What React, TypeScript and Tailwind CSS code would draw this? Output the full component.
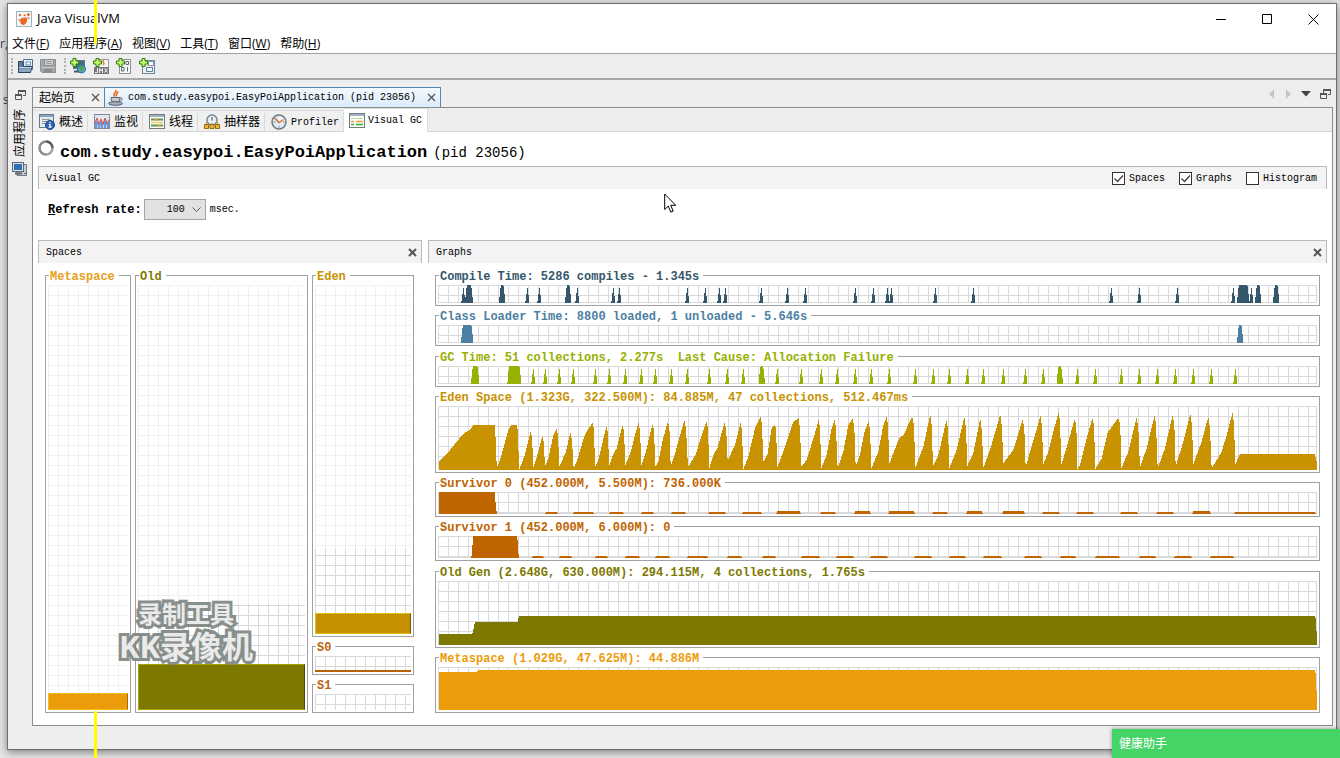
import React from "react";

type Pt = [number, number];

const MONO = "font-['Liberation_Mono','Noto_Sans_CJK_SC',monospace]";
const UI = "font-['Open_Sans','Noto_Sans_CJK_SC',sans-serif]";
const GRID =
  "bg-[linear-gradient(to_right,#d9d9dc_1px,transparent_1px),linear-gradient(to_bottom,#d9d9dc_1px,transparent_1px)] bg-[size:10px_10px]";

/* Charts are plotted at three units per pixel; samples come in pages of 900 units. */
const PAGE = 900;
const LEFT = 24;
const WIDTH = 2637;

const join = (...pages: Pt[][]): Pt[] =>
  pages.flatMap((p, i) => p.map(([x, y]) => [x + i * PAGE, y] as Pt));

const poly = (pts: Pt[]) => pts.map((p) => p.join(",")).join(" ");

/* narrow spike: 4px foot, 1px tip */
const spike = (x: number) =>
  `${x - 6},54 ${x - 6},48 ${x - 4},48 ${x - 4},33 ${x - 1},24 ${x - 1},9 ${x + 2},9 ${x + 2},24 ${x + 5},33 ${x + 5},48 ${x + 6},48 ${x + 6},54`;
/* block: full height, slightly tapered */
const block = (a: number, b: number) => {
  const t = Math.min(6, (b - a) / 3);
  return `${a},54 ${a + t / 2},20 ${a + t},0 ${b - t},0 ${b - t / 2},20 ${b},54`;
};

const compileSpikes = [
  100, 292, 328, 441, 549, 568, 771, 825, 868, 886, 993, 1072, 1126, 1275, 1330, 1372, 1384, 1516, 1630, 2043, 2128,
  2242, 2409, 2464,
];
const compileBlocks: Pt[] = [[105, 129], [207, 226], [405, 424], [2421, 2458], [2475, 2494], [2529, 2548]];
const classBlocks: Pt[] = [[93, 130], [2421, 2440]];
const gcSpikes = [
  309, 345, 387, 429, 496, 538, 586, 634, 676, 724, 771, 837, 891, 939, 1041, 1113, 1173, 1221, 1275, 1323, 1377,
  1456, 1510, 1558, 1612, 1660, 1720, 1786, 1839, 1942, 1996, 2074, 2128, 2182, 2236, 2290, 2344, 2416,
];
const gcBlocks: Pt[] = [[123, 148], [232, 274], [986, 1005], [1880, 1899]];

const eden = join(
  [
    [27, 615], [27, 590], [60, 555], [95, 512], [105, 502], [118, 497], [130, 481], [195, 481], [200, 600], [203, 603],
    [213, 575], [235, 495], [243, 481], [262, 481], [268, 612], [275, 595], [285, 568], [302, 500], [306, 515],
    [310, 607], [322, 570], [337, 513], [341, 530], [345, 604], [355, 580], [370, 510], [380, 492], [384, 510],
    [388, 605], [395, 590], [408, 560], [421, 502], [426, 525], [431, 612], [440, 590], [465, 508], [488, 472],
    [491, 490], [496, 605], [505, 585], [529, 485], [533, 500], [538, 602], [548, 570], [560, 550], [578, 480],
    [582, 500], [586, 600], [600, 568], [625, 473], [630, 495], [634, 600], [645, 570], [667, 478], [672, 495],
    [676, 605], [685, 590], [697, 530], [714, 468], [719, 500], [722, 603], [735, 565], [763, 466], [768, 490],
    [774, 607], [797, 568], [829, 468], [834, 490], [838, 610], [850, 570], [862, 550], [884, 472], [889, 500],
    [893, 590],
  ],
  [
    [0, 572], [15, 540], [32, 472], [36, 500], [40, 612], [55, 575], [75, 490], [92, 454], [96, 480], [100, 590],
    [112, 570], [125, 490], [134, 478], [138, 490], [142, 607], [160, 560], [190, 470], [206, 460], [210, 490],
    [214, 605], [230, 585], [255, 505], [266, 463], [270, 490], [274, 610], [290, 570], [305, 490], [314, 463],
    [318, 490], [323, 612], [340, 560], [355, 480], [368, 460], [373, 490], [377, 605], [390, 570], [405, 495],
    [416, 470], [420, 495], [424, 610], [445, 560], [460, 480], [470, 455], [474, 480], [478, 596], [508, 518],
    [520, 510], [547, 455], [552, 480], [556, 608], [580, 545], [601, 448], [605, 480], [609, 604], [625, 570],
    [649, 466], [654, 490], [658, 610], [680, 555], [703, 455], [708, 490], [712, 603], [730, 565], [751, 460],
    [756, 500], [760, 608], [780, 555], [811, 448], [816, 490], [820, 595], [850, 555], [878, 463], [883, 490],
    [887, 607],
  ],
  [
    [0, 560], [18, 500], [32, 450], [36, 490], [40, 597], [55, 560], [70, 500], [86, 442], [90, 470], [94, 600],
    [115, 530], [134, 462], [139, 480], [142, 612], [150, 600], [170, 520], [187, 460], [192, 480], [196, 612],
    [215, 580], [233, 503], [260, 465], [267, 460], [271, 490], [274, 610], [295, 560], [320, 457], [325, 490],
    [330, 606], [350, 550], [374, 450], [378, 480], [383, 610], [405, 550], [428, 450], [433, 480], [437, 604],
    [460, 530], [481, 445], [486, 480], [490, 597], [515, 530], [535, 455], [540, 490], [545, 610], [575, 560],
    [590, 510], [608, 442], [612, 480], [616, 597], [630, 568], [855, 568], [860, 590], [860, 615],
  ],
);

/* [from, to, height] */
type Bar = [number, number, number];
const survivor0: Bar[] = [
  [343, 384, 6], [428, 492, 6], [535, 582, 6], [631, 672, 6], [721, 768, 6], [834, 888, 6], [936, 996, 6],
  [1038, 1113, 9], [1170, 1218, 6], [1272, 1323, 9], [1374, 1455, 9], [1506, 1554, 6], [1608, 1659, 9],
  [1716, 1785, 9], [1836, 1890, 6], [1938, 1992, 6], [2070, 2124, 6], [2178, 2232, 6], [2286, 2343, 9],
  [2412, 2658, 6],
];
const survivor1: Bar[] = [
  [306, 342, 6], [385, 427, 6], [493, 534, 6], [583, 630, 6], [673, 720, 6], [769, 834, 6], [889, 936, 6],
  [996, 1038, 6], [1111, 1170, 6], [1218, 1272, 6], [1320, 1374, 6], [1452, 1506, 6], [1555, 1608, 6],
  [1657, 1716, 6], [1782, 1836, 6], [1888, 1938, 6], [1993, 2070, 6], [2125, 2178, 6], [2232, 2286, 6],
  [2340, 2412, 6],
];
const bars = (list: Bar[]) =>
  list.map(([a, b, h]) => <polygon key={a} points={`${a},66 ${a + 5},${66 - h} ${b - 5},${66 - h} ${b},66`} />);

function Frame({ title, color, className, children }: {
  title: string; color: string; className?: string; children: React.ReactNode;
}) {
  return (
    <section className={`relative flex flex-col border border-[#a0a0a4] px-0.5 pb-0.5 pt-[9px] ${className ?? ""}`}>
      <h3 className={`absolute -top-[7px] left-[3px] whitespace-pre bg-white pl-px pr-1 text-[12px] font-bold leading-4 ${MONO} ${color}`}>
        {title}
      </h3>
      {children}
    </section>
  );
}

function Graph({ title, color, height, top = 0, children }: {
  title: string; color: string; height: string; top?: number; children: React.ReactNode;
}) {
  const units: Record<string, number> = {
    "h-[18px]": 54, "h-16": 192, "h-[22px]": 66, "h-[43px]": 129,
  };
  const h = units[height];
  return (
    <Frame title={title} color={color}>
      <div className={`${height} relative ${GRID}`}>
        <svg
          className="block h-full w-full"
          viewBox={`${LEFT} ${top} ${WIDTH} ${h}`}
          preserveAspectRatio="none"
          shapeRendering="crispEdges"
          aria-hidden="true"
        >
          <g className="fill-[#d9d9dc]">
            <rect x={LEFT + WIDTH - 3} y={top} width="3" height={h} />
            <rect x={LEFT} y={top + h - 3} width={WIDTH} height="3" />
          </g>
          <g className={color} fill="currentColor">{children}</g>
        </svg>
      </div>
    </Frame>
  );
}

function Space({ title, color, fill, veil, used, className }: {
  title: string; color: string; fill?: string; veil: number; used: number; className?: string;
}) {
  return (
    <Frame title={title} color={color} className={className}>
      <div className={`flex flex-1 flex-col justify-between ${GRID}`}>
        <div className="bg-white/60" style={{ height: `${veil}%` }} />
        {fill && <div className={fill} style={{ height: `${used}%` }} />}
      </div>
    </Frame>
  );
}

const svg16 = { width: 16, height: 16, viewBox: "0 0 16 16", "aria-hidden": true, className: "shrink-0" } as const;

const AppIcon = () => (
  <svg {...svg16}>
    <rect x=".5" y=".5" width="15" height="15" fill="#f4f8fa" stroke="#9db4c0" />
    <path d="M5 7.500c2-1.500 3.500 0 4.500-1.500l1.500 1.500c.8 2.500-1 6.500-3.800 6.500s-3.900-4-2.200-6.500z" fill="#ea6a24" />
    <circle cx="4" cy="4" r="1.200" fill="#ea6a24" /><circle cx="12.300" cy="3.500" r="1.500" fill="#ea6a24" />
    <circle cx="8.500" cy="4.300" r="1" fill="#ea6a24" /><circle cx="12.500" cy="7" r=".9" fill="#ea6a24" />
    <circle cx="3.500" cy="9" r=".9" fill="#ea6a24" />
  </svg>
);
const OpenIcon = () => (
  <svg {...svg16}>
    <path d="M6.500 1.500h9v10h-9z" fill="#e5eef8" stroke="#4d6e96" />
    <path d="M9 4h4.500v3H9z" fill="#fff" stroke="#6e8fb5" />
    <path d="M1.500 3.500h4l1 5h8.500l-1.500 6h-12z" fill="#5f7d9d" stroke="#2c4462" />
    <path d="M2 10.500h12.500L13 14H2z" fill="#8ba4bf" /><path d="M2 9.500h12.500" stroke="#c6d6e6" />
  </svg>
);
const SaveIcon = () => (
  <svg {...svg16}>
    <path d="M.5 1.500h15v13H2l-1.500-1.500z" fill="#a4a6a9" stroke="#8e9194" />
    <path d="M4.500 1.500h9v6h-9z" fill="#c9cbcd" stroke="#8b8d90" /><path d="M6.500 3.500h5M6.500 5.500h5" stroke="#96989b" />
    <path d="M1 9.500h14" stroke="#c4c6c8" /><path d="M4 11h8v3.500H4z" fill="#8a8d90" />
  </svg>
);
const Plus = () => (
  <path d="M3 .5h3v2.500h2.500v3H6v2.500H3V6H.5V3H3z" fill="#c4f56a" stroke="#2f7d12" />
);
const HostIcon = () => (
  <svg {...svg16}>
    <rect x="3.500" y="2.500" width="11" height="8" fill="#3f7080" stroke="#6e7780" />
    <path d="M4 13.500h7M8 11v2" stroke="#555" strokeWidth="2" />
    <circle cx="11.500" cy="11" r="4" fill="#5aa7d8" stroke="#2c6c9c" />
    <path d="M9 9l3-1.500 2 2-1.500 2.500-1 2-2-2z" fill="#4fa545" /><Plus />
  </svg>
);
const JmxIcon = () => (
  <svg {...svg16}>
    <rect x="4.500" y="1.500" width="11" height="9" fill="#f7f7f7" stroke="#999" />
    <path d="M11 2c-3 2 2 3-1 5" stroke="#e5852f" fill="none" strokeWidth="1.500" />
    <rect x="1" y="9" width="15" height="7" fill="#777" />
    <path d="M4.500 10v4.500H2M6.500 15v-4.500L8 13l1.500-2.500V15M11.500 10.500l3 4M14.500 10.500l-3 4" stroke="#f2f2f2" fill="none" />
    <Plus />
  </svg>
);
const DumpIcon = () => (
  <svg {...svg16}>
    <rect x="3.500" y="1.500" width="11" height="14" fill="#f6f7f8" stroke="#8b9298" />
    <path d="M10 3.500h2.500v3H10zM5.500 9.500h2.500v3.500H5.500zM11.500 9v4.500" stroke="#5d6a76" fill="none" /><Plus />
  </svg>
);
const SnapIcon = () => (
  <svg {...svg16}>
    <rect x="3.500" y="2.500" width="12" height="13" fill="#e9eff6" stroke="#70889f" />
    <path d="M9.500 3.500h5v4h-5z" fill="#fff" stroke="#7b94ac" />
    <path d="M7.500 9.500h6v4h-6z" fill="#f4f8fc" stroke="#5b7fa5" /><path d="M8 7.500h3" stroke="#ef9a4a" /><Plus />
  </svg>
);
const JavaIcon = () => (
  <svg {...svg16}>
    <path d="M7.500 0c2 2-3 3-1 6.500M9.500 1.500c1 1.500-2 2-1 5" stroke="#e8731f" strokeWidth="1.700" fill="none" />
    <path d="M3 7.500h9l-.500 3.500c-.500 1.500-7.500 1.500-8 0z" fill="#c4ccd3" stroke="#5d6973" />
    <path d="M12 8c3.300-.500 2.800 3-.700 3" stroke="#5d6973" fill="none" />
    <ellipse cx="7.500" cy="13.500" rx="7" ry="1.800" fill="#a5aeb7" stroke="#525e68" />
  </svg>
);
const OverviewIcon = () => (
  <svg {...svg16}>
    <rect x=".5" y=".5" width="14" height="13" fill="#e3ebf2" stroke="#64798c" />
    <path d="M1 2h13" stroke="#8ba3b8" strokeWidth="2" /><path d="M3 5.500h8M3 7.500h5M3 9.500h4" stroke="#8c9aa7" />
    <circle cx="11" cy="11" r="4.500" fill="#2f66b4" stroke="#1d4585" />
    <path d="M11 7.800v1.400M9.800 10.500H11V13M9.600 13.200h3" stroke="#fff" strokeWidth="1.200" fill="none" />
  </svg>
);
const MonitorIcon = () => (
  <svg {...svg16}>
    <rect x=".5" y=".5" width="15" height="14" fill="#dfe8f0" stroke="#7f8c97" />
    <path d="M1 14V9l2-3 2 5 2-5 2 4 2-5 2 4 2-2v7z" fill="#6f96d8" />
    <path d="M1 9l2-5 2 6 2-5 2 5 2-6 2 5 2-3" stroke="#d8504a" fill="none" />
    <path d="M3.500 14v-3M6.500 14v-2M9.500 14v-3M12.500 14v-3" stroke="#c6daf5" />
  </svg>
);
const ThreadsIcon = () => (
  <svg {...svg16}>
    <rect x=".5" y=".5" width="15" height="14" fill="#fbfbf6" stroke="#6f7b86" />
    <path d="M1 2h14" stroke="#a3b1bd" strokeWidth="2" />
    <path d="M2 5.500h12" stroke="#58965a" strokeWidth="2" /><path d="M2 8.500h12" stroke="#edcf6a" strokeWidth="1.500" />
    <path d="M2 11.500h12" stroke="#58965a" strokeWidth="2" />
    <path d="M6 5.500h3M9 11.500h3" stroke="#e8a040" strokeWidth="2" />
  </svg>
);
const SamplerIcon = () => (
  <svg {...svg16}>
    <circle cx="8" cy="6" r="5" fill="#e9f1f8" stroke="#7c8791" strokeWidth="1.500" />
    <path d="M8 3v3.500" stroke="#444" />
    <path d="M2.500 11V8.500M13.500 11V8.500M8 11V9" stroke="#a87a20" />
    <path d="M.5 10.500h4v4h-4zM6 10.500h4v4H6zM11.500 10.500h4v4h-4z" fill="#f2b632" stroke="#94690f" />
  </svg>
);
const ProfilerIcon = () => (
  <svg {...svg16}>
    <circle cx="8" cy="8" r="7" fill="#dfeaf4" stroke="#6e7b86" strokeWidth="1.500" />
    <path d="M8 8V2.500A5.500 5.500 0 0 1 13.500 8z" fill="#f7fbff" />
    <path d="M3.500 4l4.500 4.500L12.500 5.500" stroke="#d9702f" strokeWidth="1.500" fill="none" />
    <path d="M8 13.500V12M2.500 8H4M13.500 8H12" stroke="#777" />
  </svg>
);
const GcIcon = () => (
  <svg {...svg16}>
    <rect x=".5" y=".5" width="15" height="14" fill="#fcfcf8" stroke="#6f7b86" />
    <path d="M1 2h14" stroke="#a3b1bd" strokeWidth="2" />
    <path d="M2 5.500h4M7.500 5.500h6" stroke="#b4dc8a" /><path d="M2 8.500h3M7 8.500h7" stroke="#ef9c3a" strokeWidth="1.300" />
    <path d="M2 11.500h3M7 11.500h7" stroke="#38b038" strokeWidth="1.300" />
  </svg>
);
const HostsIcon = () => (
  <svg {...svg16}>
    <path d="M5 3.500h9.500v11H5z" fill="#c8ccd0" stroke="#75797d" />
    <path d="M12 12.500h2" stroke="#666" />
    <rect x=".5" y="1.500" width="11" height="9" fill="#dfe4e8" stroke="#596570" />
    <rect x="2" y="3" width="8" height="6" fill="#2f6fb5" /><path d="M3 12.500h7" stroke="#596570" strokeWidth="2" />
  </svg>
);
const RestoreIcon = () => (
  <svg width="11" height="11" viewBox="0 0 11 11" fill="none" stroke="#555" aria-hidden="true">
    <path d="M3.500 4V1.500h7v4H8" /><path d="M3 1h8" strokeWidth="2" />
    <path d="M.5 5.500h6v4h-6z" /><path d="M0 5h7" strokeWidth="2" />
  </svg>
);
const Cross = ({ bold = false }: { bold?: boolean }) => (
  <svg width="9" height="9" viewBox="0 0 9 9" stroke="#555" strokeWidth={bold ? 2 : 1.3} aria-hidden="true">
    <path d="M1 1l7 7M8 1L1 8" />
  </svg>
);

function SectionHeader({ title, children }: { title: string; children?: React.ReactNode }) {
  return (
    <header className={`flex h-[23px] items-center justify-between border-x border-t border-[#b9b9b9] bg-[#f3f3f3] pl-[7px] text-[10px] ${MONO}`}>
      <h2>{title}</h2>
      {children}
    </header>
  );
}

function Check({ label, checked }: { label: string; checked?: boolean }) {
  return (
    <label className="flex items-center gap-1">
      <span className="relative flex">
        <input type="checkbox" defaultChecked={checked} className="peer h-[13px] w-[13px] appearance-none border border-[#333] bg-white" />
        <svg className="pointer-events-none absolute inset-0 hidden peer-checked:block" width="13" height="13" viewBox="0 0 13 13" fill="none" stroke="#444" strokeWidth="1.400" aria-hidden="true">
          <path d="M2.500 6.500l3 3L11 3.500" />
        </svg>
      </span>
      {label}
    </label>
  );
}

const menus = [
  ["文件", "F"], ["应用程序", "A"], ["视图", "V"], ["工具", "T"], ["窗口", "W"], ["帮助", "H"],
];

const viewTabs = [
  { label: "概述", Icon: OverviewIcon },
  { label: "监视", Icon: MonitorIcon },
  { label: "线程", Icon: ThreadsIcon },
  { label: "抽样器", Icon: SamplerIcon },
  { label: "Profiler", Icon: ProfilerIcon },
];

const Grip = () => <span className="mr-1 h-4 border-l-2 border-dotted border-[#b0b0b0]" />;

export default function App() {
  return (
    <div className="relative flex min-h-screen flex-col overflow-hidden bg-[#e4e4e4] pb-2 pl-[7px] pr-[3px] pt-[3px] text-black">
      <span className={`absolute left-0 top-[34px] text-[12px] leading-5 text-[#24405c] ${UI}`}>r,</span>
      <span className={`absolute left-[3px] top-[90px] text-[12px] leading-5 text-[#333] ${UI}`}>s</span>

      <main className="relative flex flex-1 flex-col border border-[#6e6e6e] bg-[#eeeeee] shadow-[0_2px_8px_rgba(0,0,0,0.45)]">
        <div className={`flex h-[30px] items-center bg-white pl-2 text-[13px] ${UI}`}>
          <AppIcon />
          <h1 className="ml-[5px] flex-1">Java VisualVM</h1>
          <div className="flex gap-[35px] pr-[17px]">
            <button aria-label="Minimize"><svg width="11" height="11" viewBox="0 0 11 11" stroke="#000"><path d="M0 5.500h10" /></svg></button>
            <button aria-label="Maximize"><svg width="11" height="11" viewBox="0 0 11 11" fill="none" stroke="#000"><path d="M.5.5h9v9h-9z" /></svg></button>
            <button aria-label="Close"><svg width="11" height="11" viewBox="0 0 11 11" stroke="#000"><path d="M.5.5l10 10M10.500.5l-10 10" /></svg></button>
          </div>
        </div>
        <nav className={`flex h-5 items-center gap-2.5 border-b border-[#a0a0a0] bg-white pl-1 text-[12px] leading-4 ${UI}`}>
          {menus.map(([name, key]) => (
            <button key={key} className="whitespace-nowrap">{name}(<u>{key}</u>)</button>
          ))}
        </nav>
        <div className="flex h-[26px] items-center border-b-2 border-[#a8a8a8] pl-[3px]">
          <Grip />
          <button aria-label="Open"><OpenIcon /></button>
          <button aria-label="Save" className="ml-[7px] mr-2"><SaveIcon /></button>
          <Grip />
          <div className="flex gap-[7px]">
            <button aria-label="Add host"><HostIcon /></button>
            <button aria-label="Add JMX connection"><JmxIcon /></button>
            <button aria-label="Add VM coredump"><DumpIcon /></button>
            <button aria-label="Add snapshot"><SnapIcon /></button>
          </div>
        </div>

        <div className="flex flex-1 pb-[23px] pr-[3px] pt-[7px]">
          <aside className="flex w-6 flex-col items-center pt-[3px]">
            <button aria-label="Restore"><RestoreIcon /></button>
            <button className={`mt-2 flex flex-col items-center gap-1 text-[12px] leading-4 ${UI}`}>
              <span className="rotate-180 [text-orientation:sideways] [writing-mode:vertical-rl]">应用程序</span>
              <HostsIcon />
            </button>
          </aside>

          <div className="flex min-w-0 flex-1 flex-col">
            <div className="flex h-5 items-stretch">
              <div className={`flex w-[72px] items-center justify-between border-l border-t border-[#8c8c8c] bg-[#f2f2f2] pl-1.5 pr-1 text-[12px] ${UI}`}>
                <span>起始页</span>
                <button aria-label="Close 起始页"><Cross /></button>
              </div>
              <div className={`flex items-center border-x border-t border-[#4f87b0] bg-linear-to-b from-[#f3f9ff] to-[#dcecfb] pl-[3px] pr-1 text-[10px] ${MONO}`}>
                <JavaIcon />
                <span className="ml-1 mr-[11px] whitespace-nowrap">com.study.easypoi.EasyPoiApplication (pid 23056)</span>
                <button aria-label="Close application"><Cross /></button>
              </div>
              <div className="ml-auto flex items-center gap-2 pb-1.5 pr-0.5">
                <button aria-label="Previous"><svg width="8" height="10" viewBox="0 0 8 10"><path d="M6 0v10L1 5z" fill="#c6c6c6" /></svg></button>
                <button aria-label="Next"><svg width="8" height="10" viewBox="0 0 8 10"><path d="M2 0v10l5-5z" fill="#c6c6c6" /></svg></button>
                <button aria-label="Documents"><svg width="12" height="6" viewBox="0 0 12 6"><path d="M1 0h10L6 5.500z" fill="#444" /></svg></button>
                <button aria-label="Restore window"><RestoreIcon /></button>
              </div>
            </div>

            <div className="flex flex-1 flex-col border border-[#8c8c8c] bg-white pb-3">
              <div className="flex h-6 items-end border-b border-[#d4d4d4] bg-[#eeeeee]">
                {viewTabs.map(({ label, Icon }) => (
                  <button key={label} className={`flex h-[21px] items-center gap-1 border-r border-t border-[#dcdcdc] bg-[#f0f0f0] pl-1.5 pr-1 pt-0.5 ${label === "Profiler" ? `text-[10px] ${MONO}` : `text-[12px] leading-4 ${UI}`}`}>
                    <Icon />
                    {label}
                  </button>
                ))}
                <button className={`-mb-px flex h-6 items-center gap-[3px] border-r border-t border-[#dcdcdc] bg-white px-[5px] text-[10px] ${MONO}`}>
                  <GcIcon />
                  Visual GC
                </button>
              </div>

              <div className={`flex h-[34px] items-center gap-1.5 pl-[5px] ${MONO}`}>
                <svg width="16" height="16" viewBox="0 0 16 16" fill="none" strokeWidth="2.500" className="mb-0.5" aria-hidden="true">
                  <path d="M8 1.500A6.500 6.500 0 0 0 8 14.500" stroke="#8a8a8a" />
                  <path d="M8 14.500A6.500 6.500 0 0 0 14.500 8" stroke="#a0a0a0" />
                  <path d="M8 1.500A6.500 6.500 0 0 1 14.500 8" stroke="#5a5a5a" />
                </svg>
                <p className="whitespace-pre pt-2 text-[17px] font-bold leading-6">
                  com.study.easypoi.EasyPoiApplication<span className="ml-1.5 text-[14px] font-normal">(pid 23056)</span>
                </p>
              </div>

              <div className="flex flex-1 flex-col px-[5px]">
                <SectionHeader title="Visual GC">
                  <div className="flex gap-3.5 pr-[9px]">
                    <Check label="Spaces" checked />
                    <Check label="Graphs" checked />
                    <Check label="Histogram" />
                  </div>
                </SectionHeader>

                <div className={`flex h-[51px] items-center pb-2.5 pl-2.5 text-[10px] ${MONO}`}>
                  <label htmlFor="rate" className="text-[12px] font-bold"><u>R</u>efresh rate:</label>
                  <div className="relative ml-0.5 mr-1 flex">
                    <select id="rate" defaultValue="100" className="h-[21px] w-[62px] appearance-none border border-[#a5a5a5] bg-[#e2e2e2] pl-[22px] text-[10px]">
                      <option>100</option>
                      <option>200</option>
                      <option>500</option>
                    </select>
                    <svg className="pointer-events-none absolute right-[5px] top-2" width="9" height="6" viewBox="0 0 9 6" fill="none" stroke="#555" aria-hidden="true"><path d="M.5.5l4 4 4-4" /></svg>
                  </div>
                  msec.
                </div>

                <div className="flex flex-1 gap-1.5">
                  <section className="flex w-[384px] shrink-0 flex-col">
                    <SectionHeader title="Spaces">
                      <button aria-label="Close spaces" className="pr-1"><Cross bold /></button>
                    </SectionHeader>
                    <div className="flex flex-1 gap-1 pl-[7px] pr-2 pt-3">
                      <Space title="Metaspace" color="text-[#e8a020]" veil={100} used={4} className="w-[86px]"
                        fill="-mt-[18px] shrink-0 border border-[#f0bc1a] border-r-[#a86a10] bg-[#ec9c0a]" />
                      <Space title="Old" color="text-[#7d7800]" veil={75} used={10.8} className="flex-1"
                        fill="border border-[#a8a000] border-r-[#4c4a10] bg-[#7d7800]" />
                      <div className="flex w-[102px] flex-col gap-[9px]">
                        <Space title="Eden" color="text-[#c89200]" veil={75.6} used={6} className="flex-1"
                          fill="border border-[#e0c010] border-r-[#7a5a10] bg-[#c48f00]" />
                        <Space title="S0" color="text-[#b86410]" veil={0} used={12.5} className="h-[29px]"
                          fill="bg-[#b86008]" />
                        <Space title="S1" color="text-[#b86410]" veil={0} used={0} className="h-[29px]" />
                      </div>
                    </div>
                  </section>

                  <section className="flex min-w-0 flex-1 flex-col">
                    <SectionHeader title="Graphs">
                      <button aria-label="Close graphs" className="pr-1"><Cross bold /></button>
                    </SectionHeader>
                    <div className="flex flex-1 flex-col justify-between gap-[9px] px-[7px] pt-3">
                      <Graph title="Compile Time: 5286 compiles - 1.345s" color="text-[#35576b]" height="h-[18px]">
                        {compileSpikes.map((x) => <polygon key={x} points={spike(x)} />)}
                        {compileBlocks.map(([a, b]) => <polygon key={a} points={block(a, b)} />)}
                      </Graph>
                      <Graph title="Class Loader Time: 8800 loaded, 1 unloaded - 5.646s" color="text-[#4c7fa3]" height="h-[18px]">
                        {classBlocks.map(([a, b]) => <polygon key={a} points={block(a, b)} />)}
                      </Graph>
                      <Graph title="GC Time: 51 collections, 2.277s  Last Cause: Allocation Failure" color="text-[#98b000]" height="h-[18px]">
                        {gcSpikes.map((x) => <polygon key={x} points={spike(x)} />)}
                        {gcBlocks.map(([a, b]) => <polygon key={a} points={block(a, b)} />)}
                      </Graph>
                      <Graph title="Eden Space (1.323G, 322.500M): 84.885M, 47 collections, 512.467ms" color="text-[#c89200]" height="h-16" top={423}>
                        <polygon points={poly(eden)} />
                      </Graph>
                      <Graph title="Survivor 0 (452.000M, 5.500M): 736.000K" color="text-[#c06400]" height="h-[22px]">
                        <polygon points="26,66 26,0 195,0 197,40 201,66" />
                        {bars(survivor0)}
                      </Graph>
                      <Graph title="Survivor 1 (452.000M, 6.000M): 0" color="text-[#c06400]" height="h-[22px]">
                        <polygon points="124,66 130,0 262,0 264,40 267,66" />
                        {bars(survivor1)}
                      </Graph>
                      <Graph title="Old Gen (2.648G, 630.000M): 294.115M, 4 collections, 1.765s" color="text-[#7d7800]" height="h-16" top={315}>
                        <polygon points="27,507 27,474 127,474 135,438 263,438 267,421 2655,421 2658,432 2660,475 2661,507" />
                      </Graph>
                      <Graph title="Metaspace (1.029G, 47.625M): 44.886M" color="text-[#ec9c0a]" height="h-[43px]" top={573}>
                        <polygon points="27,702 27,589 138,589 144,583 2655,583 2658,597 2660,657 2661,702" />
                      </Graph>
                    </div>
                  </section>
                </div>
              </div>
            </div>
          </div>
        </div>
      </main>

      <div className="absolute left-[94px] top-0 h-11 w-[3px] bg-[#ffff00]" />
      <div className="absolute bottom-0 left-[94px] h-[47px] w-[3px] bg-[#ffff00]" />

      <div className="pointer-events-none absolute bottom-24 left-[113px] flex w-[146px] flex-col items-center whitespace-nowrap font-['Open_Sans','Noto_Sans_CJK_SC',sans-serif] font-bold text-[#e9e9e9] opacity-90 [-webkit-text-stroke:6px_#7c8480] [paint-order:stroke_fill]">
        <span className="text-[24px] leading-8">录制工具</span>
        <span className="text-[31px] leading-8">KK录像机</span>
      </div>

      <svg className="pointer-events-none absolute left-[664px] top-[193px]" width="13" height="21" viewBox="0 0 13 21" aria-hidden="true">
        <path d="M.7 1v15.500l3.600-3.400 2.500 6 2.400-1-2.500-5.800h5z" fill="#fff" stroke="#000" />
      </svg>

      <div className={`absolute bottom-0 right-0 flex h-[29px] w-[228px] items-center bg-[#46d466] pl-[7px] text-[12px] text-white shadow-[0_0_4px_rgba(0,0,0,0.4)] ${UI}`}>
        健康助手
      </div>
    </div>
  );
}
